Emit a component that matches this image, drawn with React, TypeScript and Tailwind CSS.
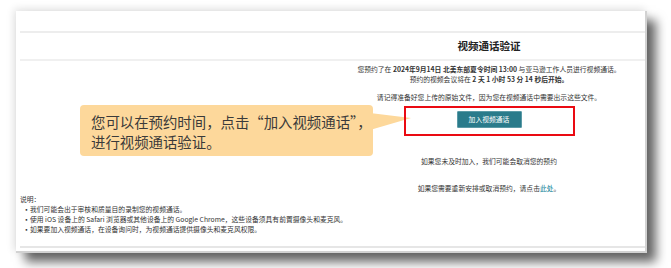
import React from "react";

const font = { fontFamily: '"Noto Sans CJK SC", "Noto Sans", sans-serif' };

export default function App() {
  return (
    <div
      className="relative w-[671px] h-[268px] bg-white overflow-hidden pt-[11px] pl-[16px]"
      style={font}
    >
      <div className="relative w-[631px] h-[242px] bg-white border-r-[2px] border-b-[2px] border-[#d2d2d2] shadow-[9px_9px_10px_rgba(0,0,0,0.6),-2px_-2px_8px_rgba(0,0,0,0.12)] flex flex-col text-[#333]">
        <div className="h-[20px]" />
        <div className="ml-[4px] h-[2px] bg-[#ededed]" />
        <div className="h-[26px] flex items-center pl-[324px] pr-[7px]">
          <div className="w-full text-center text-[10.5px] font-bold text-[#222] leading-none">
            视频通话验证
          </div>
        </div>
        <div className="ml-[4px] h-[2px] bg-[#f0f0f0]" />
        <div className="pl-[324px] pr-[7px] text-center text-[6.8px] leading-[9.5px] pt-[4px] flex flex-col items-center">
          <div>
            您预约了在 <b>2024年9月14日 北美东部夏令时间 13:00</b> 与亚马逊工作人员进行视频通话。
          </div>
          <div>
            预约的视频会议将在 <b>2 天 1 小时 53 分 14 秒后开始。</b>
          </div>
          <div className="mt-[9px]">
            请记得准备好您上传的原始文件，因为您在视频通话中需要出示这些文件。
          </div>
          <div className="mt-[8px] w-[65px] h-[17px] bg-[#2a7b8b] border border-[#5a9aa6] rounded-[1px] flex items-center justify-center text-white text-[6.8px] leading-none">
            加入视频通话
          </div>
          <div className="mt-[29px]">如果您未及时加入，我们可能会取消您的预约</div>
          <div className="mt-[18px]">
            如果您需要重新安排或取消预约，请点击<span className="text-[#0a7e94]">此处</span>。
          </div>
        </div>
        <div className="pl-[4px] text-[6.8px] leading-[10px]">
          <div>说明：</div>
          <div className="flex">
            <span className="w-[10px] pl-[3px] font-bold">•</span>
            <span>我们可能会出于审核和质量目的录制您的视频通话。</span>
          </div>
          <div className="flex">
            <span className="w-[10px] pl-[3px] font-bold">•</span>
            <span>使用 iOS 设备上的 Safari 浏览器或其他设备上的 Google Chrome，这些设备须具有前置摄像头和麦克风。</span>
          </div>
          <div className="flex">
            <span className="w-[10px] pl-[3px] font-bold">•</span>
            <span>如果要加入视频通话，在设备询问时，为视频通话提供摄像头和麦克风权限。</span>
          </div>
        </div>
        <div className="mt-[12px] ml-[4px] h-[2px] bg-[#e6e6e6]" />
      </div>

      {/* callout tail */}
      <svg className="absolute left-[370px] top-[110px]" width="44" height="24" viewBox="0 0 44 24">
        <polygon points="0,3 41,8 0,20" fill="#fdd89b" />
      </svg>
      {/* callout */}
      <div className="absolute left-[80px] top-[105px] w-[293px] h-[51px] bg-[#fdd89b] rounded-[4px] pl-[11px] pt-[7px] text-[14.4px] leading-[20px] text-[#3a3a3a]">
        <div>您可以在预约时间，点击“加入视频通话”，</div>
        <div>进行视频通话验证。</div>
      </div>
      {/* red highlight */}
      <div className="absolute left-[404px] top-[106px] w-[171px] h-[30px] border-[2px] border-[#ea0a12]" />
    </div>
  );
}
